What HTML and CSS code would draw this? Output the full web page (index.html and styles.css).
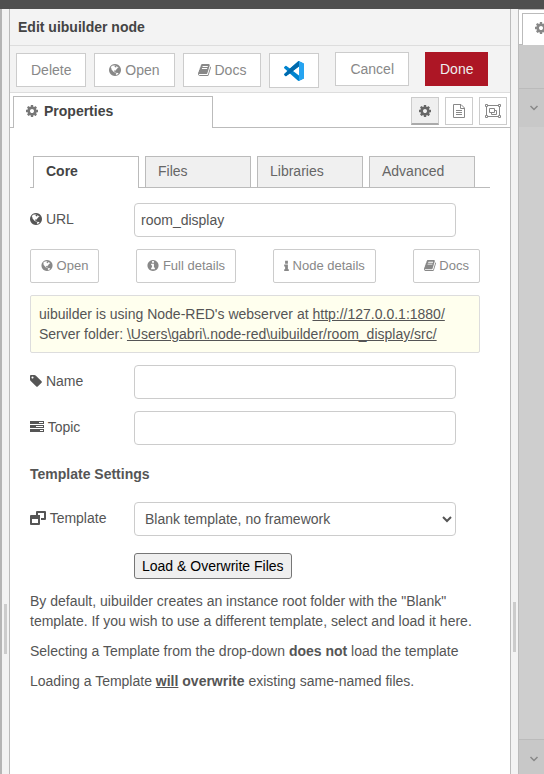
FILE: index.html
```html
<!DOCTYPE html>
<html lang="en">
<head>
<meta charset="utf-8">
<meta name="viewport" content="width=device-width, initial-scale=1">
<title>Edit uibuilder node</title>
<link rel="stylesheet" href="styles.css">
</head>
<body>
<svg class="sprite" aria-hidden="true">
  <symbol id="cog" viewBox="128 0 1536 1792"><path d="M1152 896q0-106-75-181t-181-75-181 75-75 181 75 181 181 75 181-75 75-181zm512-109v222q0 12-8 23t-20 13l-185 28q-19 54-39 91 35 50 107 138 10 12 10 25t-9 23q-27 37-99 108t-94 71q-12 0-26-9l-138-108q-44 23-91 38-16 136-29 186-7 28-36 28h-222q-14 0-24.5-8.5t-11.5-21.5l-28-184q-49-16-90-37l-141 107q-10 9-25 9-14 0-25-11-126-114-165-168-7-10-7-23 0-12 8-23 15-21 51-66.5t54-70.5q-27-50-41-99l-183-27q-13-2-21-12.5t-8-23.5v-222q0-12 8-23t19-13l186-28q14-46 39-92-40-57-107-138-10-12-10-24 0-10 9-23 26-36 98.5-107.5t94.5-71.5q13 0 26 10l138 107q44-23 91-38 16-136 29-186 7-28 36-28h222q14 0 24.5 8.5t11.5 21.5l28 184q49 16 90 37l142-107q9-9 24-9 13 0 25 10 129 119 165 170 7 8 7 22 0 12-8 23-15 21-51 66.5t-54 70.5q26 50 41 98l183 28q13 2 21 12.5t8 23.5z"/></symbol>
  <symbol id="globe" viewBox="128 0 1536 1792"><path d="M896 128q209 0 385.5 103t279.5 279.5 103 385.5-103 385.5-279.5 279.5-385.5 103-385.5-103-279.5-279.5-103-385.5 103-385.5 279.5-279.5 385.5-103zm274 521q-2 1-9.5 9.5t-13.5 9.5q2 0 4.5-5t5-11 3.5-7q6-7 22-15 14-6 52-12 34-8 51 11-2-2 9.5-13t14.5-12q3-2 15-4.5t15-7.5l2-22q-12 1-17.5-7t-6.5-21q0 2-6 8 0-7-4.5-8t-11.5 1-9 1q-10-3-15-7.5t-8-16.5-4-15q-2-5-9.5-11t-9.5-10q-1-2-2.5-5.5t-3-6.5-4-5.5-5.5-2.5-7 5-7.5 10-4.5 5q-3-2-6-1.5t-4.5 1-4.5 3-5 3.5q-3 2-8.5 3t-8.5 2q15-5-1-11-10-4-16-3 9-4 7.5-12t-8.5-14h5q-1-4-8.5-8.5t-17.5-8.5-13-6q-8-5-34-9.5t-33-.5q-5 6-4.5 10.5t4 14 3.5 12.5q1 6-5.5 13t-6.5 12q0 7 14 15.5t10 21.5q-3 8-16 16t-16 12q-5 8-1.5 18.5t10.5 16.5q2 2 1.5 4t-3.5 4.5-5.5 4-6.5 3.5l-3 2q-11 5-20.5-6t-13.5-26q-7-25-16-30-23-8-29 1-5-13-41-26-25-9-58-4 6-1 0-15-7-15-19-12 3-6 4-17.5t1-13.5q3-13 12-23 1-1 7-8.5t9.5-13.5.5-6q35 4 50-11 5-5 11.5-17t10.5-17q9-6 14-5.5t14.5 5.5 14.5 5q14 1 15.5-11t-7.5-20q12 1 3-17-4-7-8-9-12-4-27 5-8 4 2 8-1-1-9.5 10.5t-16.5 17.5-16-5q-1-1-5.5-13.5t-9.5-13.5q-8 0-16 15 3-8-11-15t-24-8q19-12-8-27-7-4-20.5-5t-19.5 4q-5 7-5.5 11.5t5 8 10.5 5.5 11.5 4 8.5 3q14 10 8 14-2 1-8.5 3.5t-11.5 4.5-6 4q-3 4 0 14t-2 14q-5-5-9-17.5t-7-16.5q7 9-25 6l-10-1q-4 0-16 2t-20.5 1-13.5-8q-4-8 0-20 1-4 4-2-4-3-11-9.5t-10-8.5q-46 15-94 41 6 1 12-1 5-2 13-6.5t10-5.5q34-14 42-7l5-5q14 16 20 25-7-4-30-1-20 6-22 12 7 12 5 18-4-3-11.5-10t-14.5-11-15-5q-16 0-22 1-146 80-235 222 7 7 12 8 4 1 5 9t2.5 11 11.5-3q9 8 3 19 1-1 44 27 19 17 21 21 3 11-10 18-1-2-9-9t-9-4q-3 5 .5 18.5t10.5 12.5q-7 0-9.5 16t-2.5 35.5-1 23.5l2 1q-3 12 5.5 34.5t21.5 19.5q-13 3 20 43 6 8 8 9 3 2 12 7.5t15 10 10 10.5q4 5 10 22.5t14 23.5q-2 6 9.500 20t10.500 23q-1 0-2.500 1t-2.500 1q3 7 15.500 14t15.500 13q1 3 2 10t3 11 8 2q2-20-24-62-15-25-17-29-3-5-5.500-15.500t-4.500-14.500q2 0 6 1.500t8.500 3.500 7.500 4 2 3q-3 7 2 17.500t12 18.500 17 19 12 13q6 6 14 19.500t0 13.500q9 0 20 10t17 20q5 8 8 26t5 24q2 7 8.500 13.500t12.500 9.500l16 8 13 7q5 2 18.500 10.500t21.500 11.500q10 4 16 4t14.500-2.500 13.500-3.500q15-2 29 15t21 21q36 19 55 11-2 1 .5 7.500t8 15.500 9 14.500 5.500 8.500q5 6 18 15t18 15q6-4 7-9-3 8 7 20t18 10q14-3 14-32-31 15-49-18 0-1-2.500-5.500t-4-8.500-2.500-8.500 0-7.500 5-3q9 0 10-3.500t-2-12.500-4-13q-1-8-11-20t-12-15q-5 9-16 8t-16-9q0 1-1.500 5.500t-1.500 6.500q-13 0-15-1 1-3 2.500-17.500t3.500-22.500q1-4 5.500-12t7.500-14.500 4-12.500-4.500-9.500-17.500-2.500q-19 1-26 20-1 3-3 10.500t-5 11.500-9 7q-7 3-24 2t-24-5q-13-8-22.500-29t-9.500-37q0-10 2.500-26.500t3-25-5.500-24.500q3-2 9-9.500t10-10.500q2-1 4.500-1.500t4.500 0 4-1.500 3-6q-1-1-4-3-3-3-4-3 7 3 28.500-1.500t27.500 1.500q15 11 22-2 0-1-2.500-9.500t-.5-13.500q5 27 29 9 3 3 15.500 5t17.500 5q3 2 7 5.500t5.500 4.500 5-.5 8.500-6.500q10 14 12 24 11 40 19 44 7 3 11 2t4.500-9.500 0-14-1.500-12.500l-1-8v-18l-1-8q-15-3-18.500-12t1.500-18.500 15-18.500q1-1 8-3.500t15.500-6.500 12.500-8q21-19 15-35 7 0 11-9-1 0-5-3t-7.500-5-4.500-2q9-5 2-16 5-3 7.500-11t7.500-10q9 12 21 2 7-8 1-16 5-7 20.500-10.500t18.500-9.500q7 2 8-2t1-12 3-12q4-5 15-9t13-5l17-11q3-4 0-4 18 2 31-11 10-11-6-20 3-6-3-9.500t-15-5.500q3-1 11.500-.5t10.500-1.500q15-10-7-16-17-5-43 12zm-163 877q206-36 351-189-3-3-12.500-4.500t-12.500-3.500q-18-7-24-8 1-7-2.500-13t-8-9-12.500-8-11-7q-2-2-7-6t-7-5.500-7.500-4.500-8.500-2-10 1l-3 1q-3 1-5.500 2.500t-5.500 3-4 3 0 2.500q-21-17-36-22-5-1-11-5.500t-10.500-7-10-1.500-11.500 7q-5 5-6 15t-2 13q-7-5 0-17.500t2-18.500q-3-6-10.500-4.500t-12 4.500-11.500 8.500-9 6.500-8.500 5.500-8.500 7.500q-3 4-6 12t-5 11q-2-4-11.500-6.500t-9.500-5.500q2 10 4 35t5 38q7 31-12 48-27 25-29 40-4 22 12 26 0 7-8 20.500t-7 21.500q0 6 2 16z"/></symbol>
  <symbol id="book" viewBox="64 0 1664 1792"><path d="M1703 478q40 57 18 129l-275 906q-19 64-76.5 107.5t-122.5 43.5h-923q-77 0-148.5-53.5t-99.5-131.5q-24-67-2-127 0-4 3-27t4-37q1-8-3-21.5t-3-19.5q2-11 8-21t16.5-23.5 16.5-23.5q23-38 45-91.5t30-91.5q3-10 .5-30t-.5-28q3-11 17-28t17-23q21-36 42-92t25-90q1-9-2.5-32t.5-28q4-13 22-30.5t22-22.5q19-26 42.5-84.5t27.5-96.5q1-8-3-25.5t-2-26.5q2-8 9-18t18-23 17-21q8-12 16.5-30.5t15-35 16-36 19.5-32 26.5-23.5 36-11.5 47.5 5.5l-1 3q38-9 51-9h761q74 0 114 56t18 130l-274 906q-36 119-71.5 153.5t-128.5 34.5h-869q-27 0-38 15-11 16-1 43 24 70 144 70h923q29 0 56-15.5t35-41.5l300-987q7-22 5-57 38 15 59 43zm-1064 2q-4 13 2 22.5t20 9.5h608q13 0 25.5-9.5t16.5-22.5l21-64q4-13-2-22.5t-20-9.5h-608q-13 0-25.5 9.5t-16.5 22.5zm-83 256q-4 13 2 22.5t20 9.5h608q13 0 25.5-9.5t16.5-22.5l21-64q4-13-2-22.5t-20-9.5h-608q-13 0-25.5 9.5t-16.5 22.5z"/></symbol>
  <symbol id="info-circle" viewBox="128 0 1536 1792"><path d="M1152 1376v-160q0-14-9-23t-23-9h-96v-512q0-14-9-23t-23-9h-320q-14 0-23 9t-9 23v160q0 14 9 23t23 9h96v320h-96q-14 0-23 9t-9 23v160q0 14 9 23t23 9h448q14 0 23-9t9-23zm-128-896v-160q0-14-9-23t-23-9h-192q-14 0-23 9t-9 23v160q0 14 9 23t23 9h192q14 0 23-9t9-23zm640 416q0 209-103 385.5t-279.5 279.5-385.5 103-385.5-103-279.5-279.5-103-385.5 103-385.5 279.5-279.5 385.5-103 385.5 103 279.5 279.5 103 385.5z"/></symbol>
  <symbol id="info" viewBox="0 0 5 14"><path d="M1 2h3v3H1zM0 6h4v5h1v2H0v-2h1V8H0z"/></symbol>
  <symbol id="tag" viewBox="128 0 1536 1792"><path d="M576 448q0-53-37.500-90.500t-90.500-37.500-90.500 37.500-37.500 90.500 37.500 90.500 90.500 37.500 90.500-37.500 37.500-90.500zm1067 576q0 53-37 90l-491 492q-39 37-91 37-53 0-90-37l-715-716q-38-37-64.500-101t-26.500-117v-416q0-52 38-90t90-38h416q53 0 117 26.500t102 64.500l715 714q37 39 37 91z"/></symbol>
  <symbol id="tasks" viewBox="0 0 14 14"><path fill-rule="evenodd" d="M0 1h14v3H0zM9 2v1h4V2zM0 5h14v3H0zM6 6v1h7V6zM0 9h14v3H0zM10 10v1h3v-1z"/></symbol>
  <symbol id="restore" viewBox="0 0 16 14"><path fill-rule="evenodd" d="M7 0h8q1 0 1 1v7q0 1-1 1h-4V7h3V2H8v2H6V1q0-1 1-1zM1 4h9v9q0 1-1 1H1q-1 0-1-1V5q0-1 1-1zM2 8v4h6V8z"/></symbol>
  <symbol id="file" viewBox="0 0 12 14"><path fill="none" stroke="currentColor" d="M.5.5H8L11.500 4v9.500H.5zM7.500.5v4h4M3 6.500h6M3 8.500h6M3 10.500h6"/></symbol>
  <symbol id="group" viewBox="0 0 16 14"><path fill="none" stroke="currentColor" d="M1.500 1.500h13v11h-13zM4.500 4.500h5v4h-5zM9.500 6.500h2v4h-5v-2"/><path class="knob" stroke="currentColor" d="M.5.5h2v2h-2zM13.500.5h2v2h-2zM.5 11.500h2v2h-2zM13.500 11.500h2v2h-2z"/></symbol>
  <symbol id="chevron" viewBox="0 0 10 14"><path fill="none" stroke="currentColor" stroke-width="1.500" d="M1.500 5 5 8.500 8.500 5"/></symbol>
</svg>

<header class="topbar"></header>
<div class="workspace">
  <div class="grip grip-left"><span></span></div>
  <main class="tray">
    <h1 class="title">Edit uibuilder node</h1>
    <div class="toolbar">
      <button type="button" class="btn">Delete</button>
      <button type="button" class="btn"><svg class="icon w12"><use href="#globe"/></svg> Open</button>
      <button type="button" class="btn"><svg class="icon w13"><use href="#book"/></svg> Docs</button>
      <button type="button" class="btn btn-code" aria-label="Open in VS Code">
        <svg class="vscode" viewBox="0 0 24 24">
          <defs><clipPath id="vs"><path clip-rule="evenodd" d="M23.150 2.587L18.210.210a1.494 1.494 0 0 0-1.705.290l-9.460 8.630-4.120-3.128a.999.999 0 0 0-1.276.057L.327 7.261A1 1 0 0 0 .326 8.740L3.899 12 .326 15.260a1 1 0 0 0 .001 1.479L1.650 17.940a.999.999 0 0 0 1.276.057l4.120-3.128 9.460 8.630a1.492 1.492 0 0 0 1.704.290l4.942-2.377A1.500 1.500 0 0 0 24 20.060V3.939a1.500 1.500 0 0 0-.850-1.352zm-5.146 14.861L10.826 12l7.178-5.448v10.896z"/></clipPath></defs>
          <g clip-path="url(#vs)"><path fill="#0084cf" d="M0 0h24v24H0z"/><path fill="#0069ac" d="M18 0v6.500L2 19l-2-2 7-8z"/><path fill="#26a4f1" d="M18 0h6v24h-6z"/></g>
        </svg>
      </button>
      <div class="finish">
        <button type="button" class="btn">Cancel</button>
        <button type="button" class="btn btn-primary">Done</button>
      </div>
    </div>
    <div class="sections">
      <button type="button" class="section-tab"><svg class="icon w12"><use href="#cog"/></svg>Properties</button>
      <div class="section-icons">
        <button type="button" class="square active" aria-label="Properties"><svg class="icon w12"><use href="#cog"/></svg></button>
        <button type="button" class="square" aria-label="Description"><svg class="icon w12"><use href="#file"/></svg></button>
        <button type="button" class="square" aria-label="Appearance"><svg class="icon w16"><use href="#group"/></svg></button>
      </div>
    </div>
    <form class="form">
      <nav class="tabs">
        <a href="#core" class="tab current">Core</a>
        <a href="#files" class="tab">Files</a>
        <a href="#libraries" class="tab">Libraries</a>
        <a href="#advanced" class="tab">Advanced</a>
      </nav>
      <div class="row">
        <label for="url"><svg class="icon w12"><use href="#globe"/></svg> URL</label>
        <input id="url" type="text" value="room_display">
      </div>
      <div class="links">
        <button type="button" class="btn small"><svg class="icon w12"><use href="#globe"/></svg> Open</button>
        <button type="button" class="btn small"><svg class="icon w12"><use href="#info-circle"/></svg> Full details</button>
        <button type="button" class="btn small"><svg class="icon w5"><use href="#info"/></svg> Node details</button>
        <button type="button" class="btn small"><svg class="icon w12"><use href="#book"/></svg> Docs</button>
      </div>
      <div class="notice">
        uibuilder is using Node-RED's webserver at <a href="#server">http://127.0.0.1:1880/</a><br>
        Server folder: <a href="#folder">\Users\gabri\.node-red\uibuilder/room_display/src/</a>
      </div>
      <div class="row">
        <label for="name"><svg class="icon w12"><use href="#tag"/></svg> Name</label>
        <input id="name" type="text">
      </div>
      <div class="row">
        <label for="topic"><svg class="icon w14"><use href="#tasks"/></svg> Topic</label>
        <input id="topic" type="text">
      </div>
      <h2 class="subtitle">Template Settings</h2>
      <div class="row">
        <label for="template"><svg class="icon w16"><use href="#restore"/></svg> Template</label>
        <select id="template"><option>Blank template, no framework</option></select>
      </div>
      <button type="button" class="load">Load &amp; Overwrite Files</button>
      <p>By default, uibuilder creates an instance root folder with the "Blank" template. If you wish to use a different template, select and load it here.</p>
      <p>Selecting a Template from the drop-down <b>does not</b> load the template</p>
      <p>Loading a Template <b><u>will</u> overwrite</b> existing same-named files.</p>
    </form>
  </main>
  <div class="grip grip-right"><span></span></div>
  <aside class="sidebar">
    <div class="side-tabs"><div class="side-tab"><svg class="icon w12"><use href="#cog"/></svg></div></div>
    <div class="side-tools"></div>
    <div class="side-head"><svg class="icon w10"><use href="#chevron"/></svg></div>
    <div class="side-body"></div>
    <div class="side-foot"><svg class="icon w10"><use href="#chevron"/></svg></div>
  </aside>
</div>
</body>
</html>
```
FILE: styles.css
```css
* { box-sizing: border-box; }

body {
  margin: 0;
  min-height: 100vh;
  display: flex;
  flex-direction: column;
  background: #fff;
  color: #555;
  font: 14px/20px "Liberation Sans", Arial, sans-serif;
}

button, input, select { font: inherit; color: inherit; margin: 0; }

.sprite { position: absolute; width: 0; height: 0; }
.icon { height: 14px; fill: currentColor; vertical-align: -2px; flex: none; }
.w5 { width: 5px; }
.w10 { width: 10px; }
.w12 { width: 12px; }
.w13 { width: 13px; }
.w14 { width: 14px; }
.w16 { width: 16px; }
.knob { fill: #fff; }

.topbar { height: 9px; background: #4f4f4f; }

.workspace {
  flex: 1;
  display: grid;
  grid-template-columns: 10px minmax(0, 1fr) 9px 25px;
}

/* Drag handles */
.grip { background: #f3f3f3; border-right: 1px solid #bbb; }
.grip span { display: block; width: 3px; height: 50px; background: #ccc; }
.grip-left { border-left: 2px solid #b5b5b5; padding: 595px 0 0 2px; }
.grip-right { border-left: 1px solid #bbb; padding: 593px 0 0 2px; }

/* Tray header */
.title {
  margin: 0;
  padding: 8px;
  background: #f3f3f3;
  border-bottom: 1px solid #ddd;
  color: #444;
  font-size: 14px;
  line-height: 20px;
}

.toolbar {
  display: flex;
  align-items: flex-start;
  gap: 8px;
  padding: 7px 6px 4px;
  background: #f3f3f3;
  border-bottom: 1px solid #ddd;
}
.finish { display: flex; gap: 16px; margin: -1px 0 0 8px; }

.btn {
  height: 34px;
  padding: 0 14px;
  border: 1px solid #ccc;
  background: #fff;
  color: #888;
  white-space: nowrap;
}
.btn-code { display: flex; align-items: center; height: 35px; }
.btn-primary { background: #ad1625; border-color: #ad1625; color: #eee; }
.vscode { width: 20px; height: 20px; }

.sections {
  display: flex;
  height: 35px;
  padding: 3px 3px 0;
  background: linear-gradient(#bbb, #bbb) bottom / 100% 1px no-repeat;
}
.section-tab {
  display: flex;
  align-items: center;
  gap: 6px;
  width: 200px;
  padding: 0 12px 4px;
  border: 1px solid #bbb;
  border-bottom: 0;
  background: #fff;
  color: #444;
  font-weight: bold;
}
.section-tab .icon { color: #777; }
.section-icons { display: flex; gap: 6px; margin: 1px 0 0 auto; }
.square {
  display: flex;
  align-items: center;
  justify-content: center;
  width: 28px;
  height: 28px;
  padding: 0;
  border: 1px solid #ccc;
  background: #fff;
  color: #888;
}
.square.active { background: #efefef; border-bottom: 2px solid #aaa; color: #666; }

/* Form */
.form { padding: 28px 20px 0; }

.tabs {
  display: flex;
  gap: 6px;
  height: 32px;
  margin-bottom: 15px;
  padding: 0 3px;
  background: linear-gradient(#bbb, #bbb) bottom / 100% 1px no-repeat;
}
.tab {
  width: 106px;
  padding: 4px 12px;
  border: 1px solid #bbb;
  background: #f0f0f0;
  color: #666;
  text-decoration: none;
}
.tab.current { background: #fff; border-bottom: 0; color: #444; font-weight: bold; }

.row { display: flex; align-items: center; margin-bottom: 12px; }
.row label { width: 104px; padding-bottom: 2px; }
.row input, .row select {
  width: 70%;
  height: 34px;
  padding: 0 6px;
  border: 1px solid #ccc;
  border-radius: 4px;
  background: #fff;
}

.links { display: flex; justify-content: space-between; max-width: 450px; }
.small { padding: 0 10px; border-radius: 2px; font-size: 13px; }
.small .icon { height: 13px; }

.notice {
  max-width: 450px;
  margin: 12px 0;
  padding: 8px;
  border: 1px solid #ddd;
  border-radius: 2px;
  background: #ffffee;
}
.notice a { color: inherit; text-decoration: underline; }

.subtitle { margin: 19px 0 18px; font-size: 14px; line-height: 20px; }

.load {
  display: block;
  height: 26px;
  margin: 17px 0 12px 104px;
  padding: 0 7px;
  border: 1px solid #767676;
  border-radius: 3px;
  background: #efefef;
  color: #000;
}
p { margin: 0 0 10px; }

/* Sidebar, shaded behind the tray */
.sidebar { display: flex; flex-direction: column; overflow: hidden; background: #cecece; color: #888; }
.side-tabs {
  height: 36px;
  padding: 3px 0 0 3px;
  border-top: 1px solid #bbb;
  background: linear-gradient(#bbb, #bbb) bottom / 100% 1px no-repeat #fff;
}
.side-tab {
  height: 32px;
  padding: 4px 12px;
  border: 1px solid #bbb;
  border-width: 1px 0 0 1px;
  background: #fff;
}
.side-tools { height: 44px; background: #cacaca; border-bottom: 1px solid #bbb; }
.side-head, .side-foot { display: flex; align-items: center; padding-left: 10px; background: #c8c8c8; }
.side-head { height: 38px; }
.side-body { flex: 1; border-bottom: 1px solid #bbb; }
.side-foot { height: 34px; padding-top: 4px; }
```
